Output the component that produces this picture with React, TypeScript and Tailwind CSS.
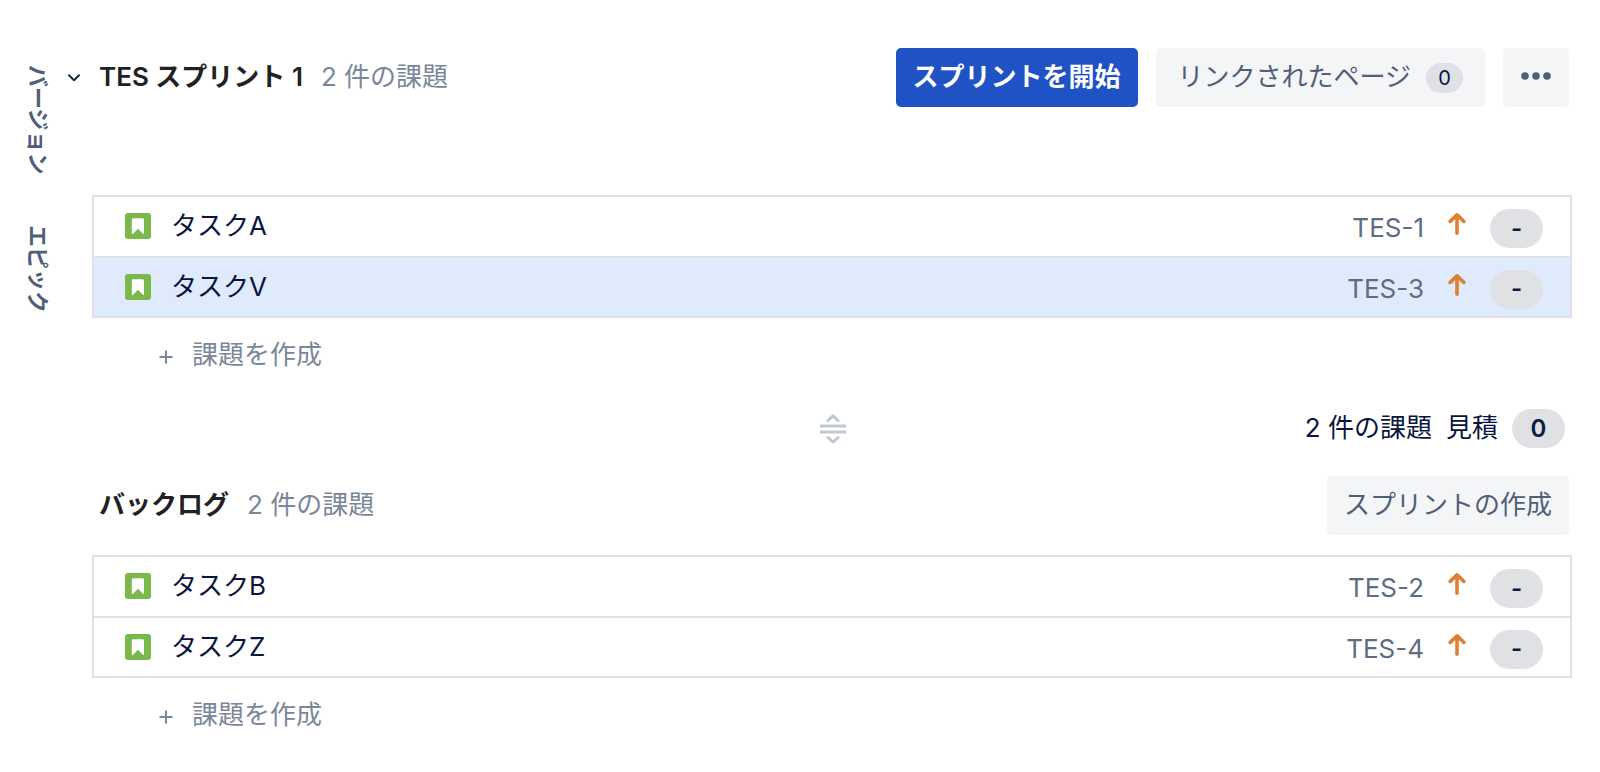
type Issue = { id: string; title: string; selected?: boolean };

const sprintIssues: Issue[] = [
  { id: 'TES-1', title: 'タスクA' },
  { id: 'TES-3', title: 'タスクV', selected: true },
];

const backlogIssues: Issue[] = [
  { id: 'TES-2', title: 'タスクB' },
  { id: 'TES-4', title: 'タスクZ' },
];

function StoryIcon() {
  return (
    <svg className="size-[26px] shrink-0" viewBox="0 0 26 26" role="img" aria-label="ストーリー">
      <rect width="26" height="26" rx="3" fill="#7ab84c" />
      <path d="M8.2 5.3h9.4c.8 0 1.4.6 1.4 1.4v14.4h-.8L13 15.7l-5.2 5.4h-1V6.7c0-.8.6-1.4 1.4-1.4z" fill="#fff" />
    </svg>
  );
}

function PriorityIcon() {
  return (
    <svg
      className="h-[24px] w-[18px] shrink-0"
      viewBox="0 0 18 24"
      fill="none"
      stroke="#dc8132"
      strokeWidth="3.6"
      strokeLinecap="round"
      strokeLinejoin="round"
      role="img"
      aria-label="優先度 高"
    >
      <path d="M9 2.8v18.4M2.2 9.4L9 2.8l6.8 6.6" />
    </svg>
  );
}

function Points({ value }: { value: string }) {
  return (
    <span className="flex h-[39px] w-[53px] shrink-0 items-center justify-center rounded-full bg-[#dfe1e5] text-2xl font-semibold text-[#091e42]">
      {value}
    </span>
  );
}

function IssueList({ issues, label }: { issues: Issue[]; label: string }) {
  return (
    <ul aria-label={label} className="divide-y-2 divide-[#dfe1e6] border-2 border-[#dfe1e6]">
      {issues.map((issue) => (
        <li
          key={issue.id}
          className={`flex h-[61px] items-center pr-[27px] pb-px pl-[31px] last:h-[58px] ${issue.selected ? 'bg-[#e0eafd]' : 'bg-white'}`}
        >
          <StoryIcon />
          <span className="ml-5 flex-1 text-[#091540]">{issue.title}</span>
          <a href={`#${issue.id}`} className="pt-1 text-[#5e6c84]">
            {issue.id}
          </a>
          <span className="ml-6 pb-1">
            <PriorityIcon />
          </span>
          <span className="ml-6 pt-[5px]">
            <Points value="-" />
          </span>
        </li>
      ))}
    </ul>
  );
}

function CreateIssue() {
  return (
    <button type="button" className="mt-4 ml-[66px] flex h-[42px] items-center gap-[18px] text-[#7a869a]">
      <svg className="mt-1 size-[16px]" viewBox="0 0 16 16" stroke="currentColor" strokeWidth="2" aria-hidden="true">
        <path d="M8 1.5v13M1.5 8h13" />
      </svg>
      課題を作成
    </button>
  );
}

export default function App() {
  return (
    <div className="flex min-h-screen bg-white font-['Inter','Noto_Sans_CJK_JP',sans-serif] text-[26px] leading-9">
      <nav className="flex w-[60px] shrink-0 flex-col items-center gap-[50px] pt-[65px] pl-4 text-[22px] font-semibold text-[#505f79]">
        <button type="button" className="[text-orientation:sideways] [writing-mode:vertical-rl]">
          バージョン
        </button>
        <button type="button" className="[text-orientation:sideways] [writing-mode:vertical-rl]">
          エピック
        </button>
      </nav>

      <main className="flex-1 pt-12 pr-7 pb-6">
        <section>
          <header className="flex h-[59px] items-center pr-[3px]">
            <button type="button" aria-label="折りたたむ" className="flex w-[39px] items-center pl-[7px] text-[#172b4d]">
              <svg
                className="h-[10px] w-[14px]"
                viewBox="0 0 14 10"
                fill="none"
                stroke="currentColor"
                strokeWidth="2"
                strokeLinecap="round"
                strokeLinejoin="round"
                aria-hidden="true"
              >
                <path d="M2 2.2l5 5 5-5" />
              </svg>
            </button>
            <h2 className="pb-0.5 font-semibold text-[#212121]">TES スプリント 1</h2>
            <span className="ml-[18px] flex-1 pb-0.5 text-[#7a869a]">2 件の課題</span>
            <button type="button" className="h-[59px] rounded-[5px] bg-[#1f53c5] px-[17px] pb-0.5 font-semibold text-white">
              スプリントを開始
            </button>
            <button
              type="button"
              className="ml-[18px] flex h-[59px] items-center gap-[15px] rounded-[5px] bg-[#f4f5f7] px-[22px] text-[#505f79]"
            >
              <span className="pb-0.5">リンクされたページ</span>
              <span className="flex h-[30px] w-[37px] items-center justify-center rounded-full bg-[#dfe1e6] text-xl text-[#091540]">
                0
              </span>
            </button>
            <button
              type="button"
              aria-label="その他の操作"
              className="ml-[18px] flex h-[59px] w-[66px] items-center justify-center rounded-[5px] bg-[#f4f5f7] pb-1"
            >
              <svg className="h-[8px] w-[30px]" viewBox="0 0 30 8" fill="#505f79" aria-hidden="true">
                <circle cx="4" cy="4" r="3.8" />
                <circle cx="15" cy="4" r="3.8" />
                <circle cx="26" cy="4" r="3.8" />
              </svg>
            </button>
          </header>

          <div className="mt-[88px] ml-8">
            <IssueList issues={sprintIssues} label="スプリントの課題" />
            <CreateIssue />
          </div>
        </section>

        <div className="mt-[33px] ml-[34px] grid h-[39px] grid-cols-[1fr_auto_1fr] items-center">
          <svg
            className="col-start-2 h-[30px] w-[26px]"
            viewBox="0 0 26 30"
            fill="none"
            stroke="#c1c7d0"
            strokeWidth="3"
            aria-hidden="true"
          >
            <path d="M0 12h26M0 18h26" />
            <path d="M8 6.5l5-4.7 5 4.7M8 23.5l5 4.7 5-4.7" strokeLinecap="round" strokeLinejoin="round" />
          </svg>
          <div className="flex items-center justify-end gap-[14px] pr-[7px] text-[#091540]">
            <span className="pb-0.5">2 件の課題</span>
            <span className="pb-0.5">見積</span>
            <Points value="0" />
          </div>
        </div>

        <section className="mt-7 ml-8">
          <header className="flex h-[59px] items-center pr-[3px] pl-[7px]">
            <h2 className="pb-0.5 font-semibold text-[#212121]">バックログ</h2>
            <span className="ml-[18px] flex-1 pb-0.5 text-[#7a869a]">2 件の課題</span>
            <button type="button" className="h-[59px] rounded-[5px] bg-[#f4f5f7] px-[17px] pb-0.5 text-[#505f79]">
              スプリントの作成
            </button>
          </header>
          <div className="mt-5">
            <IssueList issues={backlogIssues} label="バックログの課題" />
            <CreateIssue />
          </div>
        </section>
      </main>
    </div>
  );
}
